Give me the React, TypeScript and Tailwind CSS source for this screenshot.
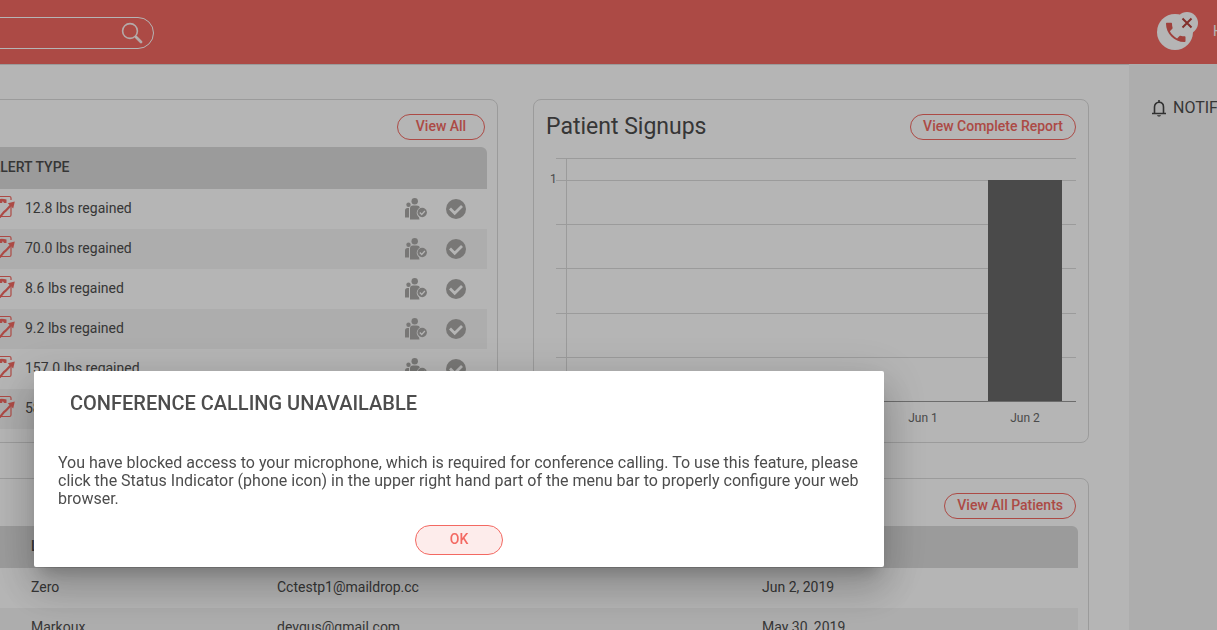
import { useState } from 'react';

const alerts = [
  '12.8 lbs regained',
  '70.0 lbs regained',
  '8.6 lbs regained',
  '9.2 lbs regained',
  '157.0 lbs regained',
  '58.0 lbs regained',
];

const patients = [
  { name: 'Zero', email: 'Cctestp1@maildrop.cc', date: 'Jun 2, 2019' },
  { name: 'Markoux', email: 'devgus@gmail.com', date: 'May 30, 2019' },
];

const pillClass =
  'h-[26px] rounded-full border border-[#f36962] px-3 pb-0.5 text-sm leading-[22px] font-medium whitespace-nowrap text-[#f36962]';

function SearchIcon() {
  return (
    <svg viewBox="0 0 22 22" className="h-[22px] w-[22px]" fill="none" stroke="#fff" strokeOpacity="0.9">
      <circle cx="9" cy="9" r="7.4" strokeWidth="1.6" />
      <path d="M14.500 14.500l1.500 1.500" strokeWidth="1.800" />
      <path d="M15.500 15.500l4.500 4.500" strokeWidth="2.800" strokeLinecap="round" />
    </svg>
  );
}

function PhoneStatusIcon() {
  return (
    <svg viewBox="0 0 42 40" className="h-10 w-[42px]">
      <circle cx="18" cy="21" r="18" fill="#fff" />
      <circle cx="30" cy="12" r="11" fill="#fff" />
      <path
        d="M9 12.8c0-.7.4-1 1-1h4c.6 0 1 .4 1 1 0 1.4.2 2.7.6 3.9.1.4 0 .8-.3 1.1l-2.400 2.500c1.600 3.100 4.100 5.500 7.200 7.100l2.400-2.400c.3-.3.7-.4 1.100-.3 1.200.4 2.600.6 3.900.6.600 0 1 .4 1 1v3.800c0 .6-.4 1-1 1C17.200 31.100 9 22.500 9 12.800z"
        fill="#e05c55"
      />
      <path d="M25.500 7.500l9 9M34.500 7.500l-9 9" stroke="#b8433d" strokeWidth="2" fill="none" />
    </svg>
  );
}

function BellIcon() {
  return (
    <svg viewBox="0 0 16 18" className="h-[18px] w-4 shrink-0" fill="none" stroke="#444">
      <path d="M3.500 14V8C3.500 5.200 5.400 3.300 8 3.300s4.500 1.900 4.500 4.700V14" strokeWidth="1.600" />
      <path d="M1 14.500h14M8 1v2.500" strokeWidth="1.600" />
      <path d="M6 16.200h4c-.3.9-1 1.300-2 1.300S6.300 17.100 6 16.200z" fill="#444" stroke="none" />
    </svg>
  );
}

function WeightIcon() {
  return (
    <svg viewBox="0 0 24 24" className="h-6 w-6 shrink-0" fill="none" stroke="#f36962">
      <path d="M20 6V4q0-1.500-1.500-1.500h-16Q1 2.500 1 4v17q0 1.500 1.500 1.500h16q1.500 0 1.500-1.500v-8" strokeWidth="1.200" />
      <path d="M4 6Q10 4 15.500 5.500V9h-2.500l-1.200-2L11 9H4z" fill="#f36962" stroke="none" />
      <path d="M8.500 23.500l4.500-5.500 2-1.500 5.500-6" strokeWidth="2.200" />
      <path d="M23.800 7.500l-1.600 7-5.400-5.200z" fill="#f36962" stroke="none" />
    </svg>
  );
}

function GroupIcon() {
  return (
    <svg viewBox="0 0 22 22" className="h-[22px] w-[22px]" fill="#a9a8a6">
      <circle cx="9.700" cy="3.300" r="3.200" />
      <circle cx="3.500" cy="6.700" r="2.200" />
      <path d="M0 19.500V12.500Q0 10 2.500 10H4V19.500z" />
      <path d="M5 21.500V10.500Q5 7.500 8 7.500h3.500q3 0 3.300 2.300A5.600 5.600 0 0 0 14 19.300l.5 2.200z" />
      <circle cx="17.200" cy="14.500" r="4.700" />
      <path d="M14.800 14.500l1.900 2 3.200-3.500" fill="none" stroke="#fff" strokeWidth="1.300" />
    </svg>
  );
}

function CheckIcon() {
  return (
    <svg viewBox="0 0 20 20" className="h-5 w-5">
      <circle cx="10" cy="10" r="10" fill="#a9a8a6" />
      <path d="M4 9.500l4.700 4.700L16 7" fill="none" stroke="#fff" strokeWidth="2.800" />
    </svg>
  );
}

function SignupsChart() {
  return (
    <svg viewBox="0 0 530 280" className="block h-[280px] w-[530px]" fontSize="12" fill="#696969">
      <g stroke="#dbdbdb" shapeRendering="crispEdges">
        {[8.5, 30.5, 74.5, 118.5, 163.5, 207.5].map((y) => (
          <path key={y} d={`M10 ${y}H530`} />
        ))}
        <path d="M20.500 8V252" />
      </g>
      <rect x="442" y="30" width="74" height="222" fill="#696969" />
      <path d="M10 251.500H530" stroke="#999" shapeRendering="crispEdges" />
      <text x="4" y="33">1</text>
      <text x="377" y="272" textAnchor="middle">Jun 1</text>
      <text x="479" y="272" textAnchor="middle">Jun 2</text>
    </svg>
  );
}

export default function App() {
  const [open, setOpen] = useState(true);

  return (
    <div className="h-screen overflow-hidden bg-white font-[Roboto,sans-serif] text-sm text-[#4d4d4d]">
      <header className="flex h-16 items-center justify-between bg-[#f36962]">
        <div className="mt-0.5 -ml-5 flex h-8 w-[174px] items-center rounded-r-full border border-white pr-2.5">
          <input aria-label="Search" className="min-w-0 flex-1 bg-transparent outline-none" />
          <button aria-label="Submit search">
            <SearchIcon />
          </button>
        </div>
        <div className="flex items-center gap-3.5 pb-0.5">
          <button aria-label="Call status">
            <PhoneStatusIcon />
          </button>
          <span className="w-1 overflow-hidden text-white">Hi</span>
        </div>
      </header>

      <div className="flex h-full">
        <main className="-ml-5 min-w-0 flex-1 border-t border-[#dbdbdb] pt-[34px] pr-10">
          <div className="flex gap-[35px]">
            <section className="h-[344px] w-[518px] shrink-0 rounded-lg border border-[#dbdbdb] pr-2.5">
              <div className="flex h-[47px] items-center justify-end pt-1.5 pr-0.5">
                <button className={`${pillClass} w-[88px]`}>View All</button>
              </div>
              <table className="w-full border-separate border-spacing-0">
                <thead>
                  <tr className="h-[42px] bg-[#dbdbdb] text-left">
                    <th className="pb-0.5 pl-2.5 font-medium">ALERT TYPE</th>
                    <th className="w-[41px]" aria-label="Assign" />
                    <th className="w-[41px] rounded-tr-md" aria-label="Done" />
                  </tr>
                </thead>
                <tbody>
                  {alerts.map((text) => (
                    <tr key={text} className="h-10 even:bg-[#f4f4f4]">
                      <td className="pb-0.5 pl-2.5">
                        <div className="flex items-center gap-2.5">
                          <span className="-mt-1">
                            <WeightIcon />
                          </span>
                          {text}
                        </div>
                      </td>
                      <td>
                        <button className="block" aria-label="Assign">
                          <GroupIcon />
                        </button>
                      </td>
                      <td>
                        <button className="block" aria-label="Mark as done">
                          <CheckIcon />
                        </button>
                      </td>
                    </tr>
                  ))}
                </tbody>
              </table>
            </section>

            <section className="h-[344px] min-w-0 flex-1 rounded-lg border border-[#dbdbdb] pr-3 pl-3">
              <div className="flex h-[50px] items-center justify-between pt-1">
                <h2 className="text-[23px]">Patient Signups</h2>
                <button className={pillClass}>View Complete Report</button>
              </div>
              <SignupsChart />
            </section>
          </div>

          <section className="mt-[35px] rounded-t-lg border border-[#dbdbdb] pr-2.5">
            <div className="flex h-[47px] items-center justify-end pt-1.5 pr-0.5">
              <button className={pillClass}>View All Patients</button>
            </div>
            <table className="w-full table-fixed border-separate border-spacing-0">
              <thead>
                <tr className="h-[42px] bg-[#dbdbdb] text-left">
                  <th className="w-[286px] pb-0.5 pl-[50px] font-medium">LAST NAME</th>
                  <th className="w-[485px] pb-0.5 pl-2.5 font-medium">EMAIL</th>
                  <th className="rounded-tr-md pb-0.5 pl-2.5 font-medium">DATE</th>
                </tr>
              </thead>
              <tbody>
                {patients.map((p) => (
                  <tr key={p.name} className="h-10 even:bg-[#f4f4f4]">
                    <td className="pb-0.5 pl-[50px]">{p.name}</td>
                    <td className="pb-0.5 pl-2.5">{p.email}</td>
                    <td className="pb-0.5 pl-2.5">{p.date}</td>
                  </tr>
                ))}
              </tbody>
            </table>
          </section>
        </main>

        <aside className="w-[88px] shrink-0 overflow-hidden bg-[#f4f4f4] pt-8 pl-[22px]">
          <div className="flex items-center gap-1.5 text-base whitespace-nowrap">
            <BellIcon />
            NOTIFICATIONS
          </div>
        </aside>
      </div>

      {open && (
        <div className="fixed inset-0 bg-black/29 pt-[371px] pl-[34px]">
          <div
            role="dialog"
            aria-labelledby="dialog-title"
            className="w-[850px] rounded-xs bg-white px-6 pt-5 pb-3 shadow-[0_11px_15px_-7px_rgba(0,0,0,0.2),0_24px_38px_3px_rgba(0,0,0,0.14),0_9px_46px_8px_rgba(0,0,0,0.12)]"
          >
            <h2 id="dialog-title" className="pl-3 text-xl leading-6 font-medium">
              CONFERENCE CALLING UNAVAILABLE
            </h2>
            <p className="pt-[39px] text-base leading-[18px]">
              You have blocked access to your microphone, which is required for conference calling. To use this
              feature, please click the Status Indicator (phone icon) in the upper right hand part of the menu bar to
              properly configure your web browser.
            </p>
            <div className="flex justify-center pt-[17px]">
              <button
                onClick={() => setOpen(false)}
                className="h-[30px] w-[88px] rounded-full border border-[#f36962] bg-[#fdeceb] pb-0.5 text-sm font-medium text-[#f36962]"
              >
                OK
              </button>
            </div>
          </div>
        </div>
      )}
    </div>
  );
}
